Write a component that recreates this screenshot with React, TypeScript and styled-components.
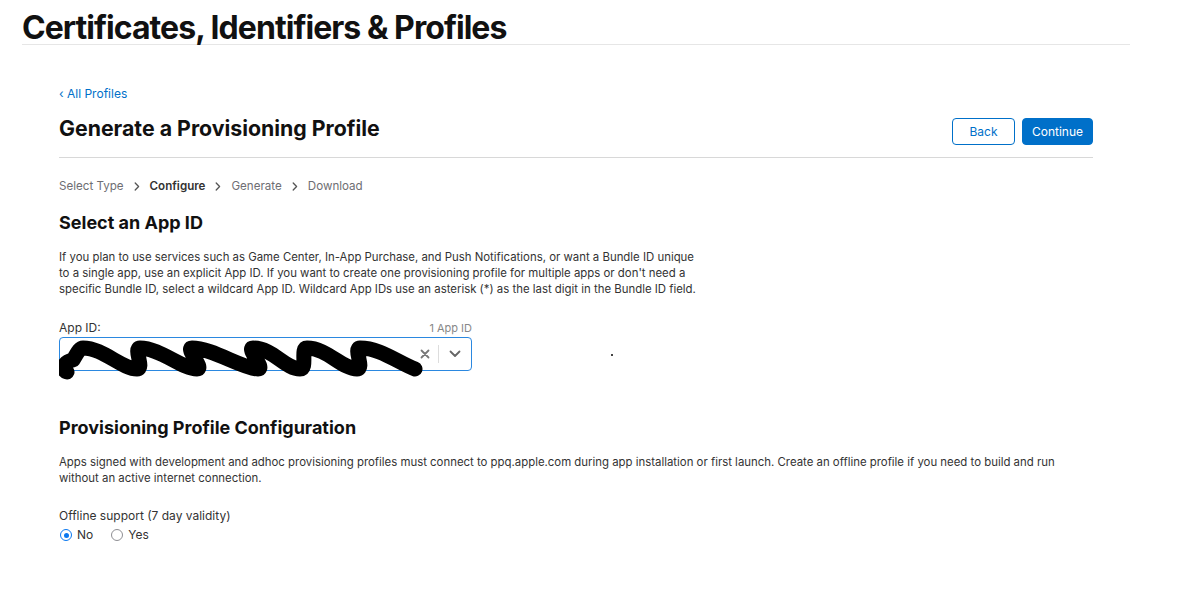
import React from "react";
import styled, { createGlobalStyle } from "styled-components";

const GlobalStyle = createGlobalStyle`
  body {
    margin: 0;
    background: #fff;
    font-family: Inter, "Noto Sans", sans-serif;
    color: #1d1d1f;
  }
`;

const Header = styled.header`
  margin-left: 22px;
  width: 1108px;
  border-bottom: 1px solid #e6e6e6;
  height: 45px;
  box-sizing: border-box;
`;

const PageTitle = styled.h1`
  margin: 0;
  padding-top: 9px;
  font-size: 32px;
  line-height: 38px;
  font-weight: 700;
  letter-spacing: -0.95px;
  color: #111;
`;

const Main = styled.main`
  margin-left: 59px;
  width: 1034px;
  padding-top: 41px;
`;

const BackLink = styled.a`
  display: block;
  font-size: 12px;
  line-height: 16px;
  color: #0070c9;
  text-decoration: none;
`;

const TopRow = styled.div`
  display: flex;
  align-items: center;
  justify-content: space-between;
  padding-top: 8px;
  padding-bottom: 12px;
  border-bottom: 1px solid #d8d8d8;
`;

const H1 = styled.h2`
  margin: 0;
  font-size: 21.3px;
  line-height: 28px;
  font-weight: 700;
  color: #111;
`;

const Buttons = styled.div`
  display: flex;
  gap: 7px;
  margin-top: 8px;
`;

const Button = styled.button<{ $primary?: boolean }>`
  box-sizing: border-box;
  height: 27px;
  width: ${(p) => (p.$primary ? "71px" : "63px")};
  padding: 0;
  border-radius: 4px;
  font-family: Inter, sans-serif;
  font-size: 12px;
  cursor: pointer;
  border: 1px solid #0070c9;
  background: ${(p) => (p.$primary ? "#0070c9" : "#fff")};
  color: ${(p) => (p.$primary ? "#fff" : "#0070c9")};
`;

const Steps = styled.div`
  display: flex;
  align-items: center;
  gap: 10px;
  margin-top: 20px;
  font-size: 11.6px;
  line-height: 16px;
  color: #6e6e73;
`;

const Step = styled.span<{ $active?: boolean }>`
  color: ${(p) => (p.$active ? "#333" : "#6e6e73")};
  font-weight: ${(p) => (p.$active ? 600 : 400)};
`;

const SectionTitle = styled.h3<{ $top: number }>`
  margin: ${(p) => p.$top}px 0 0;
  font-size: 18px;
  line-height: 24px;
  font-weight: 700;
  color: #111;
`;

const Para = styled.p`
  margin: 14px 0 0;
  font-size: 11.4px;
  line-height: 16px;
  color: #333;
  white-space: nowrap;
`;

const Field = styled.div`
  width: 413px;
  margin-top: 23px;
`;

const LabelRow = styled.div`
  display: flex;
  justify-content: space-between;
  align-items: baseline;
  font-size: 12px;
  line-height: 16px;
`;

const Label = styled.span`
  color: #333;
`;

const Count = styled.span`
  font-size: 11px;
  color: #888;
`;

const SelectRow = styled.div`
  display: flex;
  align-items: center;
  gap: 139px;
`;

const SelectBox = styled.div`
  position: relative;
  width: 413px;
  height: 34px;
  box-sizing: border-box;
  border: 1.5px solid #2b88e0;
  border-radius: 4px;
  display: flex;
  align-items: center;
  justify-content: flex-end;
  margin-top: 1px;
`;

const Redaction = styled.svg`
  position: absolute;
  left: -1px;
  top: 0;
`;

const Indicators = styled.div`
  display: flex;
  align-items: center;
  height: 100%;
  padding-right: 10px;
`;

const Sep = styled.span`
  width: 1px;
  height: 18px;
  background: #ddd;
  margin: 0 10px 0 8px;
`;

const Dot = styled.span`
  width: 2px;
  height: 2px;
  background: #444;
  margin-top: 3px;
`;

const OfflineLabel = styled.div`
  margin-top: 22px;
  font-size: 12px;
  line-height: 16px;
  color: #333;
`;

const Radios = styled.div`
  display: flex;
  gap: 17px;
  margin-top: 3px;
  font-size: 12px;
  line-height: 16px;
  color: #333;
`;

const RadioItem = styled.label`
  display: flex;
  align-items: center;
  gap: 5px;
`;

const RadioCircle = styled.span<{ $checked?: boolean }>`
  width: 12px;
  height: 12px;
  margin-left: 1px;
  box-sizing: border-box;
  border-radius: 50%;
  border: ${(p) => (p.$checked ? "1.6px solid #0a78f0" : "1.6px solid #8e8e93")};
  display: flex;
  align-items: center;
  justify-content: center;
  &::after {
    content: "";
    width: 5px;
    height: 5px;
    border-radius: 50%;
    background: ${(p) => (p.$checked ? "#0a78f0" : "transparent")};
  }
`;

const ChevronIcon = () => (
  <svg width="6" height="9" viewBox="0 0 6 9">
    <path d="M1.2 1 L4.6 4.5 L1.2 8" fill="none" stroke="#555" strokeWidth="1.3" strokeLinecap="round" strokeLinejoin="round" />
  </svg>
);

export default function App() {
  return (
    <>
      <GlobalStyle />
      <Header>
        <PageTitle>Certificates, Identifiers &amp; Profiles</PageTitle>
      </Header>
      <Main>
        <BackLink href="#">‹ All Profiles</BackLink>
        <TopRow>
          <H1>Generate a Provisioning Profile</H1>
          <Buttons>
            <Button>Back</Button>
            <Button $primary>Continue</Button>
          </Buttons>
        </TopRow>
        <Steps>
          <Step>Select Type</Step>
          <ChevronIcon />
          <Step $active>Configure</Step>
          <ChevronIcon />
          <Step>Generate</Step>
          <ChevronIcon />
          <Step>Download</Step>
        </Steps>
        <SectionTitle $top={17}>Select an App ID</SectionTitle>
        <Para>
          If you plan to use services such as Game Center, In-App Purchase, and Push Notifications, or want a Bundle ID unique
          <br />
          to a single app, use an explicit App ID. If you want to create one provisioning profile for multiple apps or don't need a
          <br />
          specific Bundle ID, select a wildcard App ID. Wildcard App IDs use an asterisk (*) as the last digit in the Bundle ID field.
        </Para>
        <Field>
          <LabelRow>
            <Label>App ID:</Label>
            <Count>1 App ID</Count>
          </LabelRow>
        </Field>
        <SelectRow>
          <SelectBox>
            <Redaction width="372" height="42" viewBox="0 0 372 42">
              <path
                d="M8 34 C2 32 4 24 14 22 C18 16 20 10 24 10 C44 10 63 31 78 31 C86 31 74 10 81 10 C101 10 123 31 138 31 C146 31 126 10 133 10 C153 10 184 31 199 31 C207 31 187 10 194 10 C214 10 226 31 241 31 C249 31 241 10 248 10 C268 10 283 31 298 31 C306 31 294 10 301 10 C321 10 338 24 356 31"
                fill="none"
                stroke="#000"
                strokeWidth="15"
                strokeLinecap="round"
                strokeLinejoin="round"
              />
            </Redaction>
            <Indicators>
              <svg width="10" height="10" viewBox="0 0 10 10">
                <path d="M1.5 1.5 L8.5 8.5 M8.5 1.5 L1.5 8.5" stroke="#777" strokeWidth="1.8" strokeLinecap="round" />
              </svg>
              <Sep />
              <svg width="12" height="8" viewBox="0 0 12 8">
                <path d="M1.5 1.5 L6 6 L10.5 1.5" fill="none" stroke="#666" strokeWidth="1.8" strokeLinecap="round" strokeLinejoin="round" />
              </svg>
            </Indicators>
          </SelectBox>
          <Dot />
        </SelectRow>
        <SectionTitle $top={45}>Provisioning Profile Configuration</SectionTitle>
        <Para>
          Apps signed with development and adhoc provisioning profiles must connect to ppq.apple.com during app installation or first launch. Create an offline profile if you need to build and run
          <br />
          without an active internet connection.
        </Para>
        <OfflineLabel>Offline support (7 day validity)</OfflineLabel>
        <Radios>
          <RadioItem>
            <RadioCircle $checked />
            No
          </RadioItem>
          <RadioItem>
            <RadioCircle />
            Yes
          </RadioItem>
        </Radios>
      </Main>
    </>
  );
}
